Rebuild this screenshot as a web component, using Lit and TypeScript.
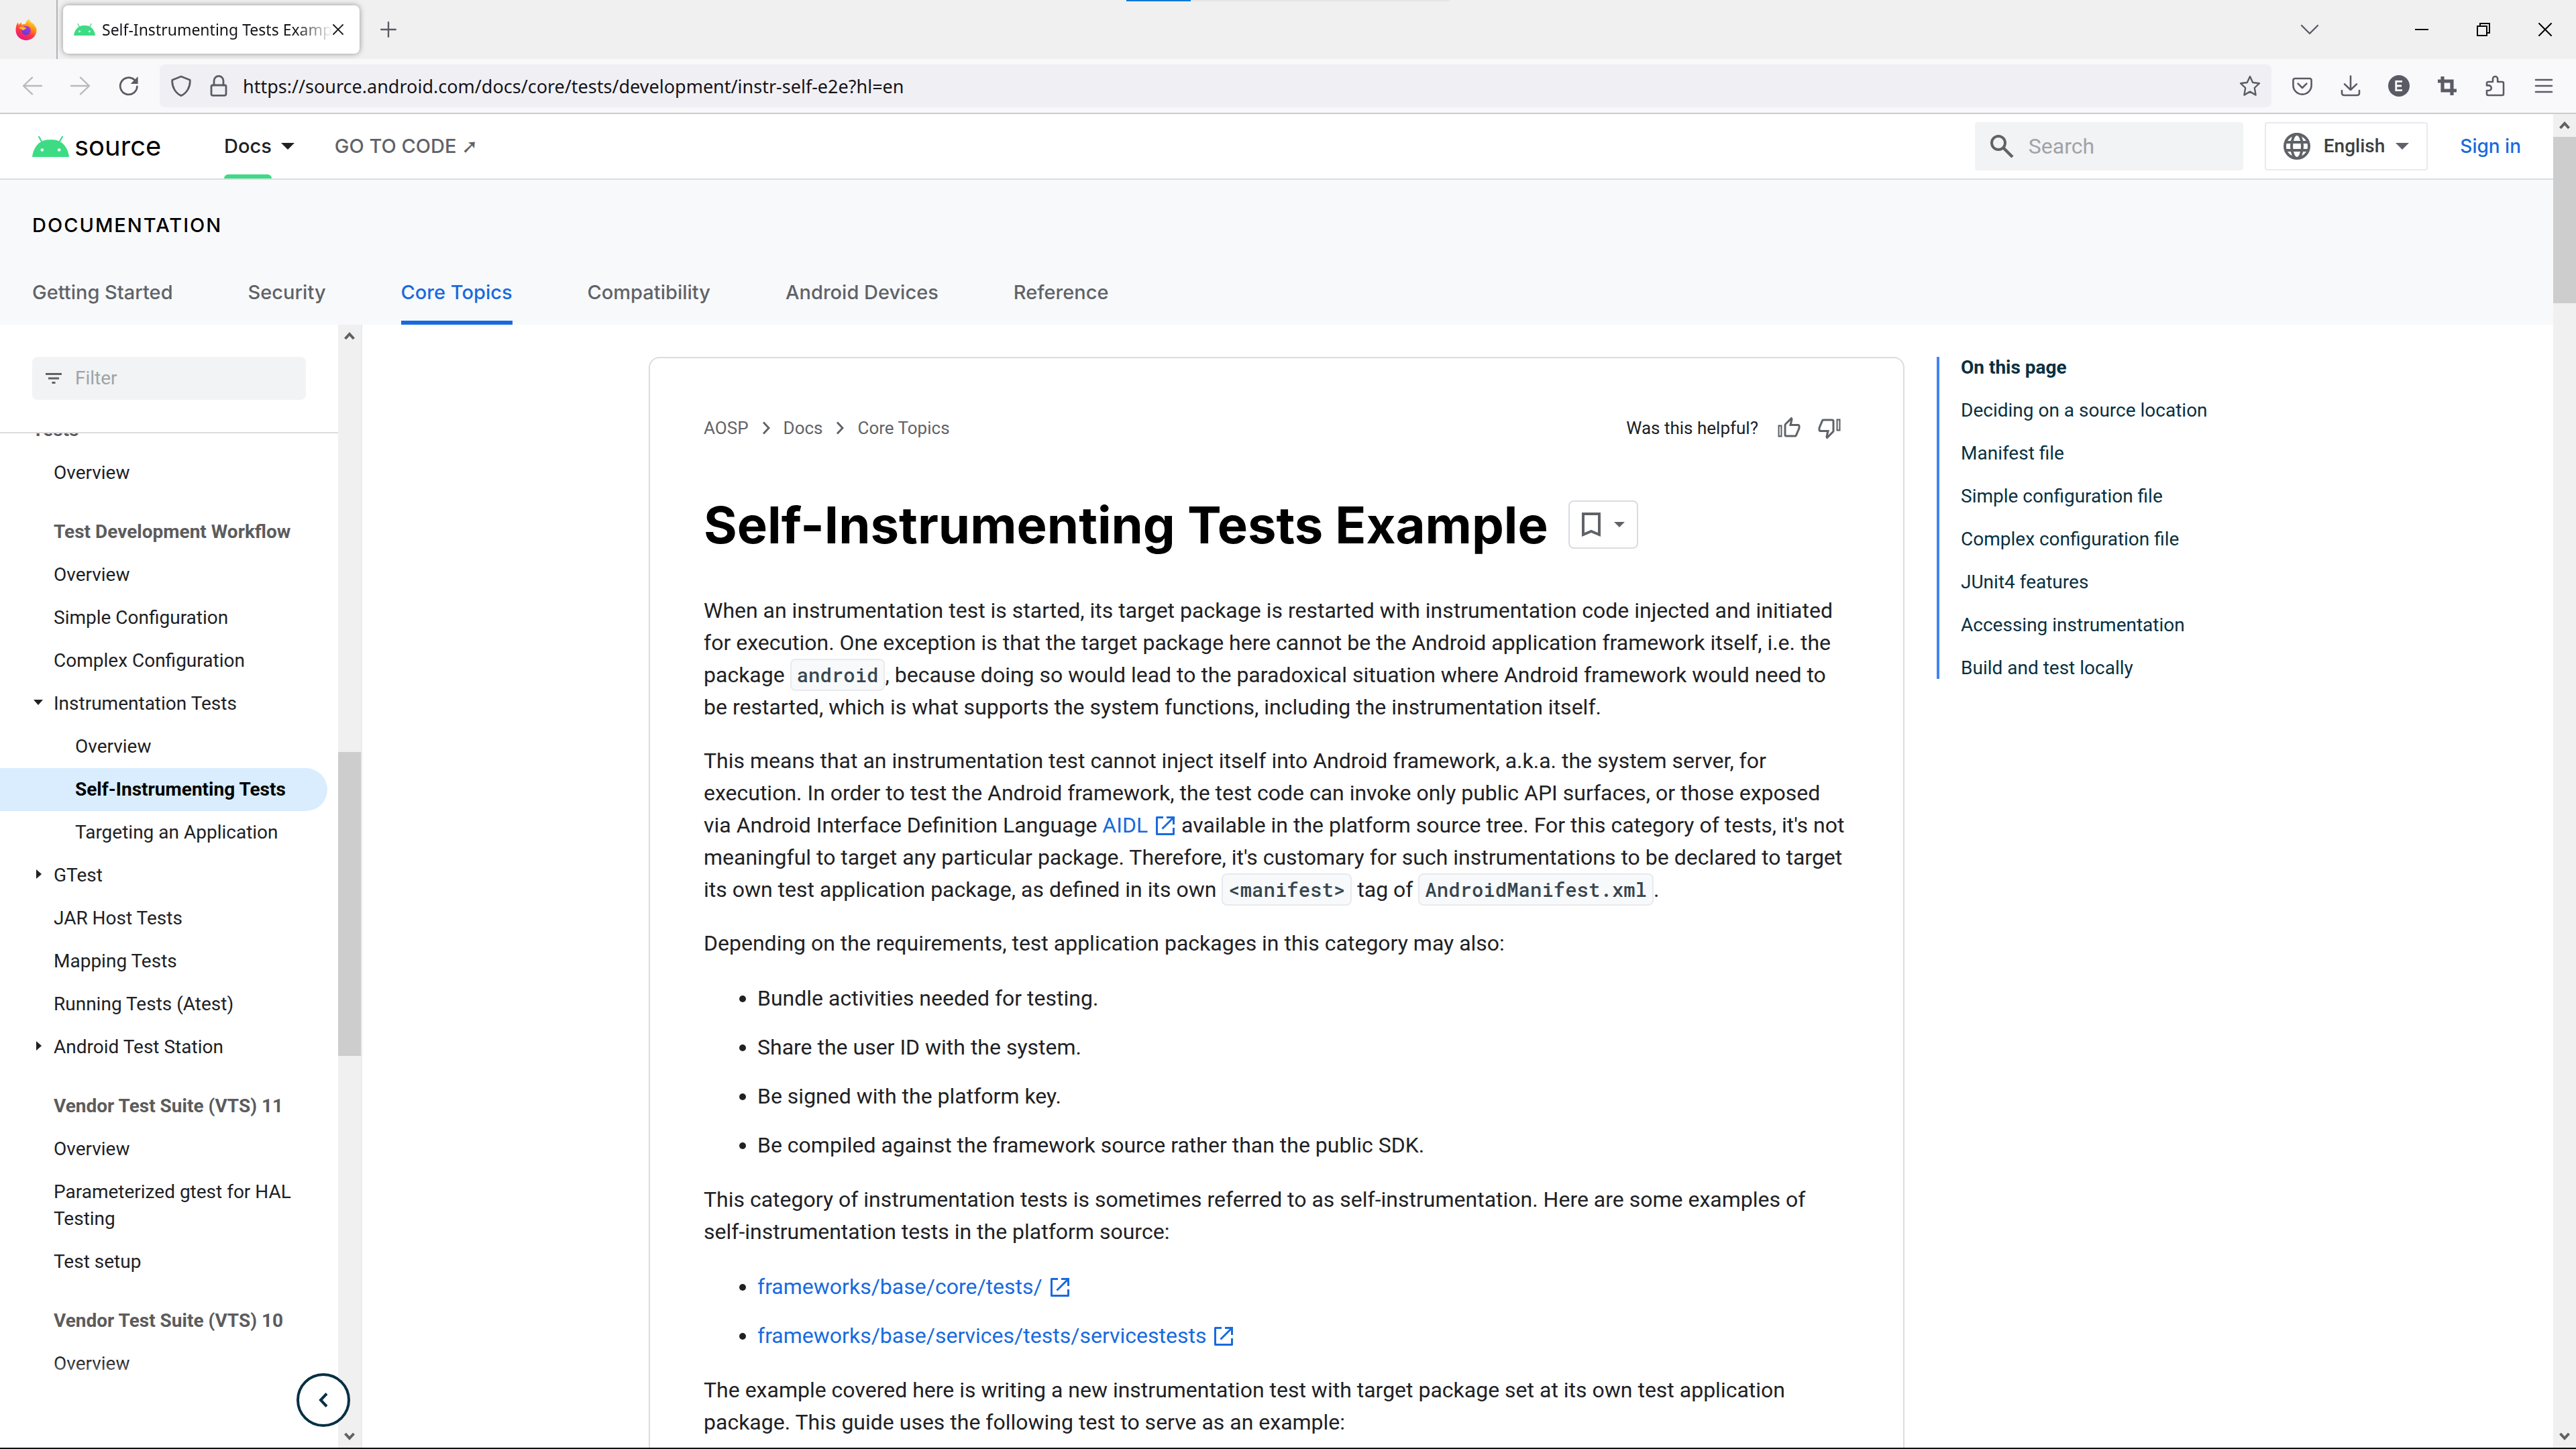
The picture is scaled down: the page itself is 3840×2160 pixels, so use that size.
import { LitElement, html, css, svg, nothing, type TemplateResult } from "lit";
import { customElement } from "lit/decorators.js";
import { classMap } from "lit/directives/class-map.js";

const androidHead = html`<svg class="droid" viewBox="0 0 55 31" aria-hidden="true">
  <path d="M0 31C1.500 17 10 7 21 5.500 25 5 30 5 34 5.500 45 7 53.500 17 55 31Z" fill="#3ddc84" />
  <path d="M15 9.500 10 .8M40 9.500 45 .8" stroke="#3ddc84" stroke-width="2.200" stroke-linecap="round" />
  <circle cx="14.800" cy="20.500" r="2.300" fill="#fff" /><circle cx="40.200" cy="20.500" r="2.300" fill="#fff" />
</svg>`;

const icon = (body: unknown, size = 32, box = 16) =>
  html`<svg class="icon" width=${size} height=${size} viewBox="0 0 ${box} ${box}" fill="none" aria-hidden="true">${body}</svg>`;

const line = (d: string, w = 1.2) =>
  svg`<path d=${d} stroke="currentColor" stroke-width=${w} stroke-linecap="round" stroke-linejoin="round"/>`;
const solid = (d: string) => svg`<path d=${d} fill="currentColor" fill-rule="evenodd"/>`;

const caret = html`<svg class="caret" viewBox="0 0 20 10" aria-hidden="true"><path d="M0 0H20L10 10Z" fill="currentColor" /></svg>`;

const thumb = svg`
  <path d="M9 21h9c.83 0 1.540-.5 1.840-1.220l3.020-7.050c.09-.23.14-.47.14-.73v-2c0-1.100-.9-2-2-2h-6.310l.95-4.570.03-.32c0-.41-.17-.79-.44-1.060L14.170 1 7.580 7.590C7.220 7.950 7 8.450 7 9v10c0 1.100.9 2 2 2zM9 9l4.340-4.340L12 10h9v2l-3 7H9V9zM1 9h4v12H1z" fill="currentColor"/>
  <path d="M3 10.500V19.500" stroke="#fff" stroke-width="1.200"/>`;

const firefox = html`<svg class="icon" width="32" height="32" viewBox="0 0 32 32" aria-hidden="true">
  <defs>
    <linearGradient id="fx" x1=".8" y1="0" x2=".3" y2="1">
      <stop offset="0" stop-color="#fff44f" /><stop offset=".35" stop-color="#ff980e" />
      <stop offset=".65" stop-color="#ff3647" /><stop offset="1" stop-color="#e31587" />
    </linearGradient>
    <linearGradient id="fg" x1=".7" y1="0" x2=".3" y2="1">
      <stop offset="0" stop-color="#b833e1" /><stop offset="1" stop-color="#5b3fd0" />
    </linearGradient>
  </defs>
  <path d="M30 12C28.500 8.500 26 6.500 24 5.500 22 4 21 2 21 0 17 2 15.500 5 15.300 7.500 13.500 7.600 11.500 8 10 9 9 8 9 6.500 9.200 5.500 7.500 6.300 6 7.500 5 9 4 8 4 6 4.200 5 1.500 7.500.5 12 .5 17 .5 25.500 7.500 32 16 32S31.500 25.500 31.500 17C31.500 15 31 13.500 30 12Z" fill="url(#fx)" />
  <circle cx="16" cy="17.500" r="6.800" fill="url(#fg)" />
  <path d="M5 14C8 11 12 12.500 16 13.500 15.500 16 12.500 15.500 11.500 17.500 10 15.500 7 14.500 5 14Z" fill="#ffbd2e" />
</svg>`;

const external = html`<svg class="ext" viewBox="0 0 28 28" aria-hidden="true">
  <path d="M11 1.500H1.500V26.500H26.500V17" fill="none" stroke="currentColor" stroke-width="3" stroke-linejoin="round" />
  <path d="M16 1.500H26.500V12M26 2 9.500 18.500" fill="none" stroke="currentColor" stroke-width="3" />
</svg>`;

interface NavItem {
  text: string;
  kind?: "head" | "top";
  deep?: boolean;
  active?: boolean;
  arrow?: "open" | "closed";
}

const NAV: NavItem[] = [
  { text: "Tests", kind: "top" },
  { text: "Overview" },
  { text: "Test Development Workflow", kind: "head" },
  { text: "Overview" },
  { text: "Simple Configuration" },
  { text: "Complex Configuration" },
  { text: "Instrumentation Tests", arrow: "open" },
  { text: "Overview", deep: true },
  { text: "Self-Instrumenting Tests", deep: true, active: true },
  { text: "Targeting an Application", deep: true },
  { text: "GTest", arrow: "closed" },
  { text: "JAR Host Tests" },
  { text: "Mapping Tests" },
  { text: "Running Tests (Atest)" },
  { text: "Android Test Station", arrow: "closed" },
  { text: "Vendor Test Suite (VTS) 11", kind: "head" },
  { text: "Overview" },
  { text: "Parameterized gtest for HAL Testing" },
  { text: "Test setup" },
  { text: "Vendor Test Suite (VTS) 10", kind: "head" },
  { text: "Overview" },
];

const TABS = ["Getting Started", "Security", "Core Topics", "Compatibility", "Android Devices", "Reference"];

const TOC = [
  "Deciding on a source location",
  "Manifest file",
  "Simple configuration file",
  "Complex configuration file",
  "JUnit4 features",
  "Accessing instrumentation",
  "Build and test locally",
];

const base = css`
  :host, * { box-sizing: border-box; }
  * { margin: 0; padding: 0; }
  button, input { font: inherit; color: inherit; border: 0; background: none; }
  a { color: inherit; text-decoration: none; }
  ul { list-style: none; }
  svg { display: block; flex: none; }
`;

@customElement("scroll-bar")
export class ScrollBar extends LitElement {
  static properties = { before: { type: Number }, thumb: { type: Number }, after: { type: Number } };
  declare before: number;
  declare thumb: number;
  declare after: number;

  static styles = css`
    :host { display: flex; flex-direction: column; align-items: center; background: #f0f0f0; flex: none; width: 34px; color: #606060; }
    .end { height: 34px; display: flex; align-items: center; }
    .thumb { width: 100%; background: #cdcdcd; }
  `;

  render() {
    return html`
      <div class="end"><svg width="16" height="14" viewBox="0 0 16 14"><path d="M1.500 11 8 4 14.500 11" fill="none" stroke="currentColor" stroke-width="4" /></svg></div>
      <div style="flex:${this.before} 1 0"></div>
      <div class="thumb" style="flex:${this.thumb} 1 0"></div>
      <div style="flex:${this.after} 1 0"></div>
      <div class="end"><svg width="16" height="14" viewBox="0 0 16 14"><path d="M1.500 3 8 10 14.500 3" fill="none" stroke="currentColor" stroke-width="4" /></svg></div>
    `;
  }
}

@customElement("browser-chrome")
export class BrowserChrome extends LitElement {
  static styles = [base, css`
    :host { display: block; flex: none; font-family: "Noto Sans", "Open Sans", sans-serif; color: #15141a; }
    .strip { height: 88px; background: #f0f0f0; display: flex; align-items: center; position: relative; }
    .loader { position: absolute; top: 0; left: 1679px; width: 482px; height: 2px; background: #e5e5e5; }
    .loader::before { content: ""; display: block; width: 96px; height: 2px; background: #0078d4; }
    .pin { width: 86px; height: 88px; border-right: 2px solid #b4b4b8; display: flex; align-items: center; padding-left: 23px; }
    .tab { width: 442px; height: 72px; margin-left: 8px; background: #fff; border-radius: 8px; box-shadow: 0 0 8px rgba(0, 0, 0, .4); display: flex; align-items: center; padding: 0 24px 0 16px; }
    .tab .droid { width: 32px; height: 18px; margin-right: 10px; }
    .title { flex: 1; min-width: 0; overflow: hidden; white-space: nowrap; font-size: 23px; line-height: 36px; -webkit-mask-image: linear-gradient(90deg, #000 84%, transparent); mask-image: linear-gradient(90deg, #000 84%, transparent); }
    .plus { margin-left: 31px; color: #5b5b66; }
    .spacer { flex: 1; }
    .window { display: flex; align-items: center; gap: 72px; padding-right: 36px; color: #000; }
    .window .chev { margin-right: 69px; color: #5b5b66; }
    .bar { height: 82px; background: #f9f9fb; border-bottom: 2px solid #ccc; display: flex; align-items: center; padding: 0 32px; color: #5b5b66; }
    .moves { display: flex; gap: 40px; margin-right: 30px; }
    .off { opacity: .4; }
    .url { flex: 1; height: 64px; border-radius: 8px; background: #f0f0f4; display: flex; align-items: center; gap: 20px; padding: 0 16px; }
    .marks { display: flex; gap: 24px; }
    .url input { flex: 1; font-size: 27px; line-height: 36px; padding-top: 2px; color: #15141a; outline: 0; }
    .tools { display: flex; gap: 40px; padding-left: 30px; }
  `];

  render() {
    return html`
      <div class="strip">
        <div class="loader"></div>
        <button class="pin" aria-label="Firefox View">${firefox}</button>
        <div class="tab">
          ${androidHead}
          <span class="title">Self-Instrumenting Tests Example</span>
          <button aria-label="Close tab">${icon(line("M1 1 15 15M15 1 1 15", 1.8), 16)}</button>
        </div>
        <button class="plus" aria-label="New tab">${icon(line("M8 .8V15.200M.8 8H15.200", 1.6), 24)}</button>
        <span class="spacer"></span>
        <div class="window">
          <button class="chev" aria-label="List all tabs">${icon(line("M2 5 8 11 14 5", 1.2), 32)}</button>
          <button aria-label="Minimize">${icon(solid("M0 9H20V11H0Z"), 20, 20)}</button>
          <button aria-label="Restore">${icon(solid("M0 4H16V20H0ZM2 6V18H14V6ZM4 0H20V16H16V14H18V2H6V4H4Z"), 20, 20)}</button>
          <button aria-label="Close">${icon(line("M1 1 19 19M19 1 1 19", 2), 20, 20)}</button>
        </div>
      </div>
      <div class="bar">
        <div class="moves">
          <button class="off" aria-label="Back">${icon(line("M15 8H1.500M8 1.800 1.500 8 8 14.200"))}</button>
          <button class="off" aria-label="Forward">${icon(line("M1 8H14.500M8 1.800 14.500 8 8 14.200"))}</button>
          <button aria-label="Reload">${icon([line("M14.200 8.500A6.300 6.300 0 1 1 12.200 3.500", 1.4), solid("M14.800 1V6.500H9.300Z")])}</button>
        </div>
        <div class="url">
          <span class="marks">
            ${icon(line("M8 1 14.600 3.600C15 9 12 13.500 8 15.300 4 13.500 1 9 1.400 3.600Z", 1.4))}
            ${icon([line("M4.500 7.500V4.200A3.500 3.500 0 0 1 11.500 4.200V7.500", 1.4), line("M3.500 7.500H12.500A1 1 0 0 1 13.500 8.500V14A1.200 1.200 0 0 1 12.300 15.200H3.700A1.200 1.200 0 0 1 2.500 14V8.500A1 1 0 0 1 3.500 7.500Z", 1.4)])}
          </span>
          <input aria-label="Address" value="https://source.android.com/docs/core/tests/development/instr-self-e2e?hl=en" />
          <button aria-label="Bookmark this page">${icon(line("M8 1 10.100 5.500 15 6.100 11.400 9.500 12.300 14.800 8 12.300 3.700 14.800 4.600 9.500 1 6.100 5.900 5.500Z", 1.2))}</button>
        </div>
        <div class="tools">
          <button aria-label="Pocket">${icon([line("M2.500 2.500H13.500A1.300 1.300 0 0 1 14.800 3.800V7.500A6.800 6.800 0 0 1 1.200 7.500V3.800A1.300 1.300 0 0 1 2.500 2.500Z", 1.3), line("M4.800 6.300 8 9.500 11.200 6.300", 1.3)])}</button>
          <button aria-label="Downloads">${icon([line("M8 .8V11M3.500 6.700 8 11 12.500 6.700", 1.3), line("M1.500 11.500V13.500A1.500 1.500 0 0 0 3 15H13A1.500 1.500 0 0 0 14.500 13.500V11.500", 1.3)])}</button>
          <button aria-label="Account">${icon(svg`<circle cx="8" cy="8" r="8" fill="currentColor"/><path d="M10.500 4.700H5.900V11.300H10.500M5.900 8H10" stroke="#fff" stroke-width="1.400"/>`)}</button>
          <button aria-label="Screenshot">${icon(svg`<path d="M4.500 1V11.500H15M1 4.500H11.500V15" stroke="currentColor" stroke-width="2.600"/>`)}</button>
          <button aria-label="Extensions">${icon(line("M2.500 5H6V2.800A1.800 1.800 0 0 1 9.600 2.800V5H13A1 1 0 0 1 14 6V14A1 1 0 0 1 13 15H2.500A1 1 0 0 1 1.500 14V11.500H3A1.900 1.900 0 0 0 3 7.700H1.500V6A1 1 0 0 1 2.500 5Z", 1.3))}</button>
          <button aria-label="Menu">${icon(line("M2 3.500H14M2 8H14M2 12.500H14", 1.3))}</button>
        </div>
      </div>
    `;
  }
}

@customElement("site-header")
export class SiteHeader extends LitElement {
  static styles = [base, css`
    :host { display: block; flex: none; font-family: "Google Sans", Inter, sans-serif; font-size: 29px; line-height: 40px; font-weight: 500; color: #5f6368; }
    .top { height: 98px; border-bottom: 2px solid #dadce0; display: flex; align-items: center; padding: 0 48px; }
    .logo { display: flex; align-items: center; gap: 8px; color: #000; font-size: 40px; font-weight: 400; width: 286px; }
    .logo .droid { width: 55px; height: 31px; }
    .docs { height: 96px; display: flex; align-items: center; gap: 14px; color: #202124; }
    .docs a { height: 96px; line-height: 96px; position: relative; }
    .docs a::after { content: ""; position: absolute; left: 0; right: 0; bottom: 0; height: 6px; border-radius: 6px 6px 0 0; background: #3ddc84; }
    .caret { width: 20px; height: 10px; }
    .code { margin-left: 60px; flex: 1; }
    .search { width: 400px; height: 72px; background: #f1f3f4; border-radius: 4px; display: flex; align-items: center; gap: 22px; padding: 0 22px; font-family: Roboto, sans-serif; font-size: 32px; font-weight: 400; margin-right: 32px; }
    .search input { width: 100%; min-width: 0; outline: 0; }
    input::placeholder { color: #9fa3a8; opacity: 1; }
    .lang { height: 72px; border: 2px solid #e8eaed; border-radius: 4px; display: flex; align-items: center; gap: 16px; padding: 0 26px; font-family: Roboto, sans-serif; font-size: 28px; color: #3c4043; margin-right: 48px; }
    .lang svg { color: #5f6368; }
    .lang .icon { margin-right: 4px; }
    .sign { color: #186ade; font-size: 28px; }
    .lower { background: #f8f9fb; height: 216px; display: flex; flex-direction: column; justify-content: space-between; padding: 48px 48px 0; }
    .product { color: #000; letter-spacing: 2px; }
    .tabs { display: flex; gap: 112px; }
    .tabs a { height: 68px; border-bottom: 6px solid transparent; }
    .tabs a.on { color: #186ade; border-bottom-color: #186ade; }
  `];

  render() {
    return html`
      <div class="top">
        <a class="logo" href="#">${androidHead}<span>source</span></a>
        <div class="docs"><a href="#">Docs</a>${caret}</div>
        <a class="code" href="#">GO TO CODE ➚</a>
        <label class="search">
          ${icon(svg`<circle cx="13" cy="13" r="10" stroke="#5f6368" stroke-width="4"/><path d="M21 21 34 34" stroke="#5f6368" stroke-width="4.500"/>`, 36, 36)}
          <input type="text" placeholder="Search" aria-label="Search" />
        </label>
        <button class="lang">
          ${icon(svg`<circle cx="20" cy="20" r="18" stroke="currentColor" stroke-width="4"/><ellipse cx="20" cy="20" rx="8" ry="18" stroke="currentColor" stroke-width="4"/><path d="M3 14H37M3 26H37" stroke="currentColor" stroke-width="4"/>`, 40, 40)}
          English ${caret}
        </button>
        <a class="sign" href="#">Sign in</a>
      </div>
      <div class="lower">
        <div class="product">DOCUMENTATION</div>
        <nav class="tabs">
          ${TABS.map((t) => html`<a href="#" class=${classMap({ on: t === "Core Topics" })}>${t}</a>`)}
        </nav>
      </div>
    `;
  }
}

@customElement("book-nav")
export class BookNav extends LitElement {
  static styles = [base, css`
    :host { display: flex; flex: none; width: 540px; position: relative; font-family: Roboto, sans-serif; font-size: 28px; line-height: 40px; color: #202124; border-right: 2px solid #e8eaed; }
    .panel { flex: 1; min-width: 0; display: flex; flex-direction: column; position: relative; }
    .filter { flex: none; height: 162px; border-bottom: 2px solid #dadce0; padding: 48px 48px 0; }
    .box { height: 64px; border-radius: 8px; background: #f1f3f4; display: flex; align-items: center; gap: 20px; padding: 0 20px; color: #5f6368; }
    .box input { width: 100%; min-width: 0; outline: 0; }
    input::placeholder { color: #9fa3a8; opacity: 1; }
    .list { flex: 1; min-height: 0; overflow: hidden; display: flex; flex-direction: column; }
    .list ul { margin-top: -37px; }
    li { padding: 12px 48px 12px 80px; display: flex; margin-right: 16px; }
    .top { padding-left: 48px; font-weight: 700; color: #5c5c5c; }
    .head { font-weight: 700; color: #5c5c5c; margin-top: 24px; }
    .deep { padding-left: 112px; }
    .active { background: #d9edff; color: #000; font-weight: 700; border-radius: 0 32px 32px 0; }
    .arrow { width: 14px; height: 14px; margin: 11px 16px 0 -30px; }
    .fade { position: absolute; left: 0; right: 0; bottom: 0; height: 132px; background: linear-gradient(transparent, #fff 60px); }
    .collapse { position: absolute; left: 442px; bottom: 31px; width: 80px; height: 80px; border-radius: 50%; border: 4px solid #073042; background: #fff; color: #073042; display: flex; align-items: center; justify-content: center; }
  `];

  render() {
    return html`
      <div class="panel">
        <div class="filter">
          <label class="box">
            <svg width="24" height="16" viewBox="0 0 24 16"><path d="M0 1.500H24M4 8H20M9.500 14.500H14.500" stroke="currentColor" stroke-width="3" /></svg>
            <input type="text" placeholder="Filter" aria-label="Filter" />
          </label>
        </div>
        <nav class="list">
          <ul>
            ${NAV.map((n) => html`<li class=${classMap({ head: n.kind === "head", top: n.kind === "top", deep: !!n.deep, active: !!n.active })}>
              ${n.arrow ? html`<svg class="arrow" viewBox="0 0 14 14"><path d=${n.arrow === "open" ? "M0 3H14L7 11Z" : "M4 0 12 7 4 14Z"} fill="currentColor" /></svg>` : nothing}
              ${n.kind ? html`<span>${n.text}</span>` : html`<a href="#">${n.text}</a>`}
            </li>`)}
          </ul>
        </nav>
        <div class="fade"></div>
      </div>
      <scroll-bar .before=${603} .thumb=${453} .after=${550}></scroll-bar>
      <button class="collapse" aria-label="Hide side navigation">
        <svg width="14" height="22" viewBox="0 0 14 22"><path d="M12 1.500 3 11 12 20.500" fill="none" stroke="currentColor" stroke-width="4" /></svg>
      </button>
    `;
  }
}

@customElement("doc-article")
export class DocArticle extends LitElement {
  static styles = [base, css`
    :host { display: block; flex: 1; min-width: 0; border: 2px solid #dadce0; border-radius: 16px; padding: 80px 80px 0; font-family: Roboto, sans-serif; font-size: 32px; line-height: 48px; color: #202124; }
    .meta { display: flex; align-items: center; font-size: 26px; line-height: 48px; }
    .crumbs { display: flex; align-items: center; gap: 20px; flex: 1; color: #5f6368; }
    .rate { display: flex; align-items: center; gap: 24px; padding-right: 12px; }
    .rate span { margin-right: 4px; }
    .rate button { color: #5f6368; }
    .titlebar { display: flex; align-items: center; gap: 30px; margin: 76px 0 60px; height: 88px; }
    h1 { font-family: "Google Sans", Inter, sans-serif; font-size: 76px; line-height: 88px; font-weight: 700; color: #000; white-space: nowrap; }
    .save { width: 104px; height: 72px; border: 2px solid #dadce0; border-radius: 8px; display: flex; align-items: center; justify-content: center; gap: 20px; color: #5f6368; }
    .save .caret { width: 16px; height: 8px; }
    p { margin-bottom: 32px; }
    ul { margin-bottom: 31px; display: flex; flex-direction: column; gap: 21px; list-style: disc; padding-left: 80px; }
    li { line-height: 52px; }
    code { font-family: "Roboto Mono", "DejaVu Sans Mono", monospace; font-size: 29px; line-height: 36px; font-weight: 500; color: #37474f; background: #f8f9fb; border: 2px solid #e8eaed; border-radius: 8px; padding: 3px 8px; }
    .link { color: #186ade; }
    .ext { display: inline-block; width: 28px; height: 28px; margin: 0 2px 0 12px; vertical-align: -4px; }
  `];

  render() {
    const sep = html`<svg width="12" height="20" viewBox="0 0 12 20" aria-hidden="true"><path d="M2 1.500 10 10 2 18.500" fill="none" stroke="currentColor" stroke-width="3" /></svg>`;
    return html`
      <div class="meta">
        <nav class="crumbs"><a href="#">AOSP</a>${sep}<a href="#">Docs</a>${sep}<a href="#">Core Topics</a></nav>
        <div class="rate">
          <span>Was this helpful?</span>
          <button aria-label="Helpful">${icon(thumb, 36, 24)}</button>
          <button aria-label="Not helpful">${icon(svg`<g transform="rotate(180 12 12)">${thumb}</g>`, 36, 24)}</button>
        </div>
      </div>
      <div class="titlebar">
        <h1>Self-Instrumenting Tests Example</h1>
        <button class="save" aria-label="Save page">
          <svg width="28" height="36" viewBox="0 0 28 36"><path d="M2 2H26V33L14 28 2 33Z" fill="none" stroke="currentColor" stroke-width="4" /></svg>
          ${caret}
        </button>
      </div>
      <p>When an instrumentation test is started, its target package is restarted with instrumentation code injected and initiated for execution. One exception is that the target package here cannot be the Android application framework itself, i.e. the package <code>android</code>, because doing so would lead to the paradoxical situation where Android framework would need to be restarted, which is what supports the system functions, including the instrumentation itself.</p>
      <p>This means that an instrumentation test cannot inject itself into Android framework, a.k.a. the system server, for execution. In order to test the Android framework, the test code can invoke only public API surfaces, or those exposed via Android Interface Definition Language <a class="link" href="#">AIDL${external}</a> available in the platform source tree. For this category of tests, it's not meaningful to target any particular package. Therefore, it's customary for such instrumentations to be declared to target its own test application package, as defined in its own <code>&lt;manifest&gt;</code> tag of <code>AndroidManifest.xml</code>.</p>
      <p>Depending on the requirements, test application packages in this category may also:</p>
      <ul>
        <li>Bundle activities needed for testing.</li>
        <li>Share the user ID with the system.</li>
        <li>Be signed with the platform key.</li>
        <li>Be compiled against the framework source rather than the public SDK.</li>
      </ul>
      <p>This category of instrumentation tests is sometimes referred to as self-instrumentation. Here are some examples of self-instrumentation tests in the platform source:</p>
      <ul>
        <li><a class="link" href="#">frameworks/base/core/tests/${external}</a></li>
        <li><a class="link" href="#">frameworks/base/services/tests/servicestests${external}</a></li>
      </ul>
      <p>The example covered here is writing a new instrumentation test with target package set at its own test application package. This guide uses the following test to serve as an example:</p>
    `;
  }
}

@customElement("page-toc")
export class PageToc extends LitElement {
  static styles = [base, css`
    :host { display: block; flex: none; width: 492px; font-family: Roboto, sans-serif; font-size: 28px; line-height: 32px; color: #073042; }
    ul { display: flex; flex-direction: column; gap: 32px; border-left: 4px solid #4285f4; padding-left: 32px; }
    .first { font-weight: 700; }
  `];

  render() {
    return html`<ul>
      <li class="first">On this page</li>
      ${TOC.map((t) => html`<li><a href="#">${t}</a></li>`)}
    </ul>`;
  }
}

@customElement("app-root")
export class AppRoot extends LitElement {
  static styles = css`
    :host { display: flex; flex-direction: column; height: 100vh; overflow: hidden; background: #fff; box-sizing: border-box; border-bottom: 2px solid #101014; }
    .view { flex: 1; min-height: 0; display: flex; }
    .page { flex: 1; min-width: 0; display: flex; flex-direction: column; }
    .body { flex: 1; min-height: 0; display: flex; }
    .main { flex: 1; min-width: 0; overflow: hidden; padding-top: 48px; display: flex; justify-content: center; }
    .columns { flex: 1; max-width: 2412px; display: flex; align-items: flex-start; gap: 48px; }
  `;

  render() {
    return html`
      <browser-chrome></browser-chrome>
      <div class="view">
        <div class="page">
          <site-header></site-header>
          <div class="body">
            <book-nav></book-nav>
            <main class="main">
              <div class="columns">
                <doc-article></doc-article>
                <page-toc></page-toc>
              </div>
            </main>
          </div>
        </div>
        <scroll-bar .before=${0} .thumb=${248} .after=${1672}></scroll-bar>
      </div>
    `;
  }
}
